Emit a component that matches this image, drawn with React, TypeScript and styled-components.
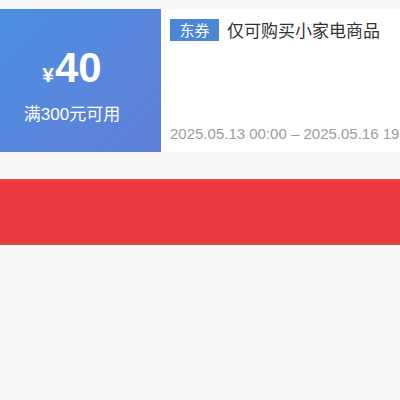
import React from 'react';
import styled, { createGlobalStyle } from 'styled-components';

const GlobalStyle = createGlobalStyle`
  html, body {
    margin: 0;
    padding: 0;
    background: #f7f7f7;
    font-family: "Noto Sans", "Noto Sans CJK SC", sans-serif;
  }
`;

const Page = styled.div`
  width: 400px;
  height: 400px;
  overflow: hidden;
  background: #f7f7f7;
  padding-top: 9px;
  box-sizing: border-box;
`;

const Coupon = styled.div`
  display: flex;
  height: 143px;
  width: 400px;
`;

const ValuePanel = styled.div`
  flex: 0 0 161px;
  box-sizing: border-box;
  padding: 8px 17px 0 0;
  display: flex;
  flex-direction: column;
  align-items: center;
  justify-content: center;
  background: linear-gradient(135deg, #4a8fdf 0%, #5a86dc 60%, #5e7fd8 100%);
  color: #fff;
`;

const Amount = styled.div`
  display: flex;
  align-items: baseline;
  font-family: "Liberation Sans", "Noto Sans CJK SC", sans-serif;
  font-weight: 700;
`;

const Currency = styled.span`
  font-size: 21px;
  margin-right: 1px;
`;

const Number = styled.span`
  font-size: 42px;
  line-height: 48px;
`;

const Threshold = styled.div`
  margin-top: 12px;
  font-size: 17px;
  line-height: 22px;
  font-family: "Liberation Sans", "Noto Sans CJK SC", sans-serif;
`;

const InfoPanel = styled.div`
  flex: 1;
  min-width: 0;
  background: #fff;
  display: flex;
  flex-direction: column;
  justify-content: space-between;
  padding: 8px 0 10px 9px;
  overflow: hidden;
`;

const TitleRow = styled.div`
  display: flex;
  align-items: center;
  gap: 8px;
`;

const Tag = styled.span`
  display: inline-flex;
  align-items: center;
  justify-content: center;
  width: 49px;
  height: 22px;
  background: #4a88d6;
  color: #fff;
  font-size: 15px;
  font-family: "Noto Sans CJK SC", sans-serif;
`;

const Title = styled.span`
  font-size: 17px;
  color: #333;
  white-space: nowrap;
  font-family: "Noto Sans CJK SC", sans-serif;
`;

const Period = styled.div`
  font-size: 15px;
  line-height: 17px;
  color: #9c9c9c;
  white-space: nowrap;
  font-family: "Liberation Sans", sans-serif;
`;

const Banner = styled.div`
  margin-top: 27px;
  height: 66px;
  width: 400px;
  background: linear-gradient(180deg, #e54a4e 0px, #f0373e 4px, #f0373e 9px, #e83a3e 12px, #e83a3e 62px, #e04a4c 66px);
`;

export default function App() {
  return (
    <>
      <GlobalStyle />
      <Page>
        <Coupon>
          <ValuePanel>
            <Amount>
              <Currency>¥</Currency>
              <Number>40</Number>
            </Amount>
            <Threshold>满300元可用</Threshold>
          </ValuePanel>
          <InfoPanel>
            <TitleRow>
              <Tag>东券</Tag>
              <Title>仅可购买小家电商品</Title>
            </TitleRow>
            <Period>2025.05.13 00:00 – 2025.05.16 19:59</Period>
          </InfoPanel>
        </Coupon>
        <Banner />
      </Page>
    </>
  );
}
